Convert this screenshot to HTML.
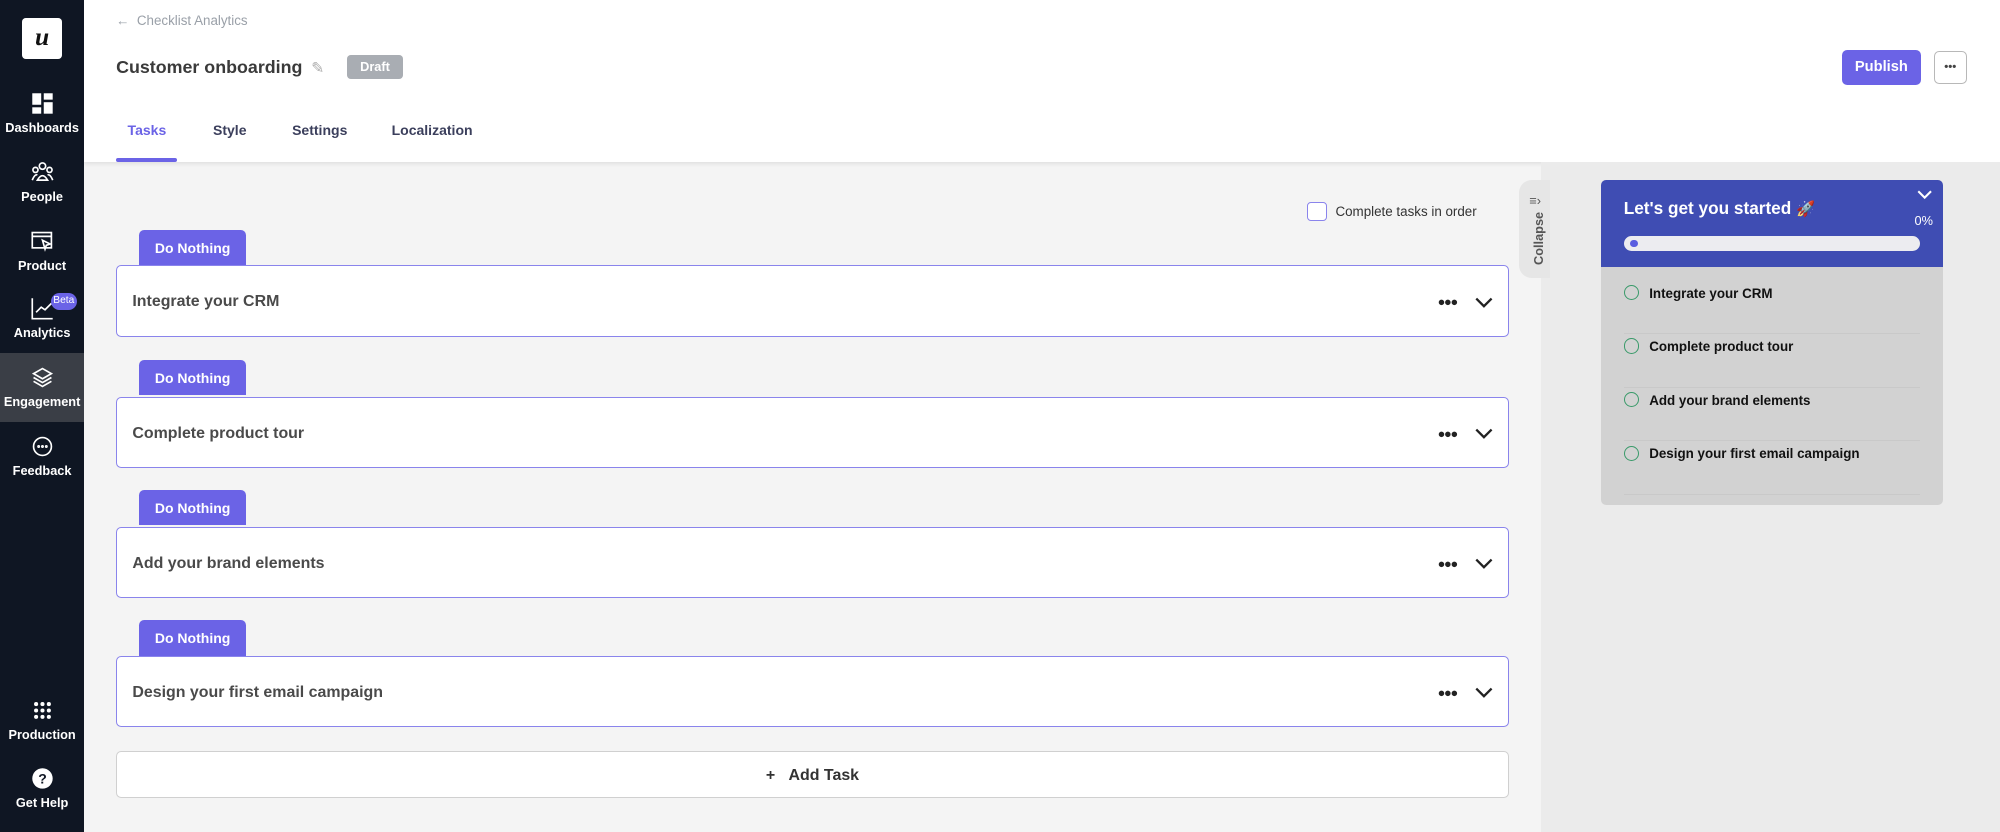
<!DOCTYPE html>
<html><head><meta charset="utf-8"><style>
*{box-sizing:border-box;margin:0;padding:0}
html,body{width:2000px;height:832px;overflow:hidden}
body{font-family:"Liberation Sans",sans-serif;background:#f4f4f4}
#r{zoom:1.27551;width:1568px;height:652px;position:relative}
.a{position:absolute}
.sb{left:0;top:0;width:66px;height:652px;background:#0f1623}
.ni{position:absolute;left:0;width:66px;text-align:center;color:#fff;font-size:10px;font-weight:bold}
.ni svg{display:block;margin:0 auto 4px}
.hd{left:66px;top:0;width:1502px;height:127px;background:#fff;box-shadow:0 2px 3px rgba(0,0,0,.08)}
.tab{top:96px;font-size:11px;font-weight:bold;color:#3b3f5c}
.lbl{left:109px;width:84px;height:28px;background:#6b63e6;color:#fff;font-size:11px;font-weight:bold;text-align:center;line-height:29px;border-radius:4px 4px 0 0}
.card{left:91px;width:1092px;height:56px;background:#fff;border:1px solid #8a84ec;border-radius:4px;font-size:12.5px;font-weight:bold;color:#4a4a4a;line-height:56px;padding-left:12px}
.dots{position:absolute;right:40px;top:0;font-size:10px;color:#222;letter-spacing:-1px}
.chev{position:absolute;right:12px;top:23px}
.li{position:absolute;left:18px;font-size:10.5px;font-weight:bold;color:#111;width:232px;height:42px;border-bottom:1px solid #c9c9c9;line-height:20px}
.li i{display:inline-block;width:12px;height:12px;border:1.3px solid #3a9a6a;border-radius:50%;vertical-align:-2px;margin-right:8px}
</style></head><body><div id="r">
<div class="a sb">
 <div class="a" style="left:17px;top:14px;width:32px;height:32px;background:#fff;border-radius:3px;text-align:center;font:italic bold 20px 'Liberation Serif',serif;line-height:30px;color:#111">u</div>
 <div class="ni" style="top:72px"><svg width="18" height="18"><rect x="1" y="1" width="7" height="9" fill="#fff"/><rect x="10" y="1" width="7" height="5" fill="#fff"/><rect x="1" y="12" width="7" height="5" fill="#fff"/><rect x="10" y="8" width="7" height="9" fill="#fff"/></svg>Dashboards</div>
 <div class="ni" style="top:126px"><svg width="18" height="18" fill="none" stroke="#fff" stroke-width="1.3"><circle cx="9" cy="4" r="2.5"/><circle cx="3.5" cy="7" r="2"/><circle cx="14.5" cy="7" r="2"/><path d="M5 15q4-7 8 0zM1 15q2-5 4-4M17 15q-2-5-4-4"/></svg>People</div>
 <div class="ni" style="top:180px"><svg width="18" height="18" fill="none" stroke="#fff" stroke-width="1.3"><rect x="1" y="2" width="15" height="12"/><path d="M1 5h15M9 8l6 3-3 1-1 3z"/></svg>Product</div>
 <div class="ni" style="top:233px"><svg width="18" height="18" fill="none" stroke="#fff" stroke-width="1.3"><path d="M1 1v16h16M4 12l4-4 3 2 5-5"/></svg>Analytics</div>
 <div class="a" style="left:40px;top:230px;width:20px;height:13px;background:#6b63e6;border-radius:7px;color:#fff;font-size:8px;line-height:13px;text-align:center">Beta</div>
 <div class="a" style="left:0;top:277px;width:66px;height:54px;background:#3a3e46"></div>
 <div class="ni" style="top:287px"><svg width="18" height="18" fill="none" stroke="#fff" stroke-width="1.3"><path d="M9 2l7 4-7 4-7-4zM2 9l7 4 7-4M2 12l7 4 7-4"/></svg>Engagement</div>
 <div class="ni" style="top:341px"><svg width="18" height="18" fill="none" stroke="#fff" stroke-width="1.3"><circle cx="9" cy="9" r="7"/><circle cx="6" cy="9" r=".5"/><circle cx="9" cy="9" r=".5"/><circle cx="12" cy="9" r=".5"/></svg>Feedback</div>
 <div class="ni" style="top:548px"><svg width="18" height="18" fill="#fff"><circle cx="4" cy="4" r="1.6"/><circle cx="9" cy="4" r="1.6"/><circle cx="14" cy="4" r="1.6"/><circle cx="4" cy="9" r="1.6"/><circle cx="9" cy="9" r="1.6"/><circle cx="14" cy="9" r="1.6"/><circle cx="4" cy="14" r="1.6"/><circle cx="9" cy="14" r="1.6"/><circle cx="14" cy="14" r="1.6"/></svg>Production</div>
 <div class="ni" style="top:601px"><svg width="18" height="18"><circle cx="9" cy="9" r="8" fill="#fff"/><text x="9" y="13" font-size="11" font-weight="bold" text-anchor="middle" fill="#0f1623" font-family="Liberation Sans">?</text></svg>Get Help</div>
</div>
<div class="a hd"></div>
<div class="a" style="left:91px;top:10px;font-size:10.5px;color:#9aa0a8">&#8592;&nbsp;&nbsp;Checklist Analytics</div>
<div class="a" style="left:91px;top:45px;font-size:14px;font-weight:bold;color:#3a3a3a">Customer onboarding <span style="color:#aaa;font-weight:normal;font-size:12px;margin-left:3px">&#9998;</span></div>
<div class="a" style="left:272px;top:43px;width:44px;height:19px;background:#a9adb3;border-radius:3px;color:#fff;font-size:10px;font-weight:bold;text-align:center;line-height:19px">Draft</div>
<div class="a" style="left:1444px;top:39px;width:62px;height:28px;background:#6b63e6;border-radius:4px;color:#fff;font-size:11.5px;font-weight:bold;text-align:center;line-height:28px">Publish</div>
<div class="a" style="left:1516px;top:40px;width:26px;height:26px;border:1px solid #b8b8b8;border-radius:4px;background:#fff;text-align:center;line-height:24px;font-size:9px;font-weight:bold;color:#444">&#8226;&#8226;&#8226;</div>
<div class="a tab" style="left:100px;color:#6b63e6">Tasks</div>
<div class="a" style="left:91px;top:124px;width:48px;height:3px;background:#6b63e6;border-radius:2px"></div>
<div class="a tab" style="left:167px">Style</div>
<div class="a tab" style="left:229px">Settings</div>
<div class="a tab" style="left:307px">Localization</div>
<div class="a" style="left:1208px;top:127px;width:360px;height:525px;background:#ebebeb"></div>
<div class="a" style="left:1025px;top:158px;width:15px;height:15px;border:1.3px solid #8a84ec;border-radius:3px;background:#fff"></div>
<div class="a" style="left:1047px;top:160px;font-size:10.5px;color:#333">Complete tasks in order</div>
<div class="a lbl" style="top:180px">Do Nothing</div>
<div class="a card" style="top:208px">Integrate your CRM<span class="dots">&#9679;&#9679;&#9679;</span><svg class="chev" width="14" height="10" fill="none" stroke="#222" stroke-width="1.8"><path d="M1 2l6 6 6-6"/></svg></div>
<div class="a lbl" style="top:282px">Do Nothing</div>
<div class="a card" style="top:311px">Complete product tour<span class="dots">&#9679;&#9679;&#9679;</span><svg class="chev" width="14" height="10" fill="none" stroke="#222" stroke-width="1.8"><path d="M1 2l6 6 6-6"/></svg></div>
<div class="a lbl" style="top:384px">Do Nothing</div>
<div class="a card" style="top:413px">Add your brand elements<span class="dots">&#9679;&#9679;&#9679;</span><svg class="chev" width="14" height="10" fill="none" stroke="#222" stroke-width="1.8"><path d="M1 2l6 6 6-6"/></svg></div>
<div class="a lbl" style="top:486px">Do Nothing</div>
<div class="a card" style="top:514px">Design your first email campaign<span class="dots">&#9679;&#9679;&#9679;</span><svg class="chev" width="14" height="10" fill="none" stroke="#222" stroke-width="1.8"><path d="M1 2l6 6 6-6"/></svg></div>
<div class="a" style="left:91px;top:589px;width:1092px;height:37px;background:#fff;border:1px solid #d0d0d0;border-radius:4px;text-align:center;line-height:37px;font-size:12.5px;font-weight:bold;color:#333">+&nbsp;&nbsp;&nbsp;Add Task</div>
<div class="a" style="left:1191px;top:141px;width:24px;height:77px;background:#e6e6e6;border-radius:10px 0 0 10px"></div>
<div class="a" style="left:1199px;top:151px;font-size:10px;color:#555">&#8801;&#8250;</div>
<div class="a" style="left:1186px;top:182px;transform:rotate(-90deg);font-size:10px;font-weight:bold;color:#555;width:40px;text-align:center">Collapse</div>
<div class="a" style="left:1255px;top:141px;width:268px;height:255px;background:#d2d2d2;border-radius:4px;overflow:hidden">
 <div class="a" style="left:0;top:0;width:268px;height:68px;background:#3f4db3"></div>
 <div class="a" style="left:18px;top:14px;font-size:13.5px;font-weight:bold;color:#fff">Let's get you started <span style="color:#e66;font-size:12px">&#128640;</span></div>
 <svg class="a" style="left:248px;top:8px" width="12" height="8" fill="none" stroke="#fff" stroke-width="1.6"><path d="M1 1l5 5 5-5"/></svg>
 <div class="a" style="left:246px;top:26px;font-size:10px;color:#fff">0%</div>
 <div class="a" style="left:18px;top:44px;width:232px;height:12px;background:#ececf0;border-radius:6px"></div>
 <div class="a" style="left:23px;top:47px;width:6px;height:6px;background:#5a5de0;border-radius:50%"></div>
 <div class="li" style="top:79px"><i></i>Integrate your CRM</div>
 <div class="li" style="top:121px"><i></i>Complete product tour</div>
 <div class="li" style="top:163px"><i></i>Add your brand elements</div>
 <div class="li" style="top:205px"><i></i>Design your first email campaign</div>
</div>
</div></body></html>
